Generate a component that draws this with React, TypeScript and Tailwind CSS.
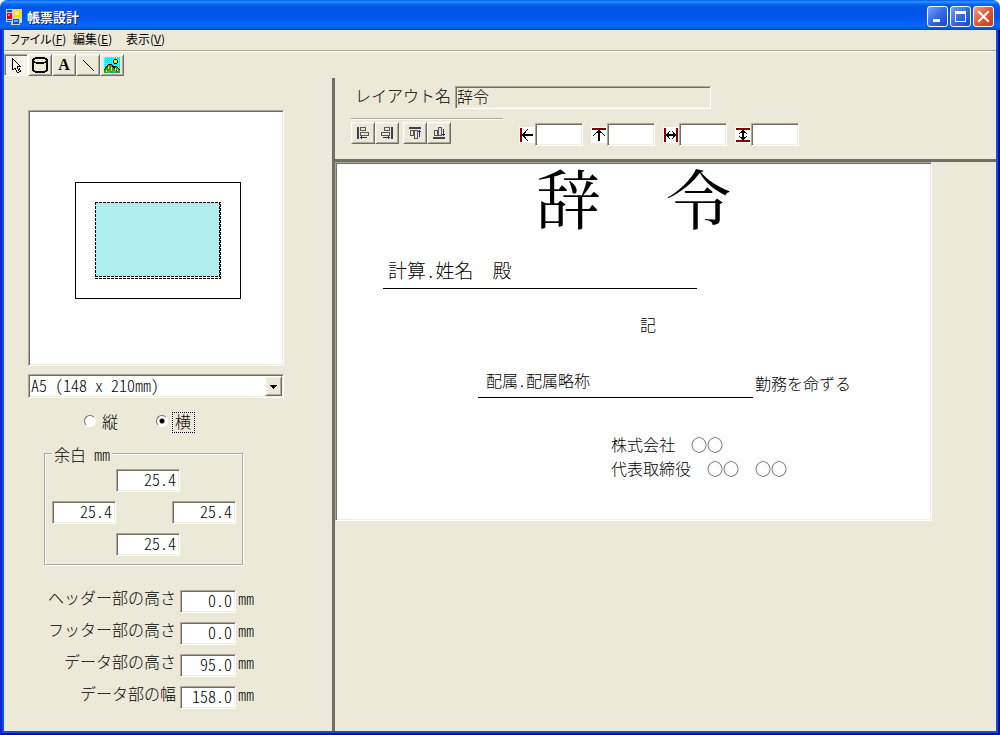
import { useState } from 'react';
import type { ReactNode } from 'react';
import clsx from 'clsx';

const sunken =
  'border border-t-[#aca899] border-l-[#aca899] border-r-white border-b-white shadow-[inset_1px_1px_0_#716f64,inset_-1px_-1px_0_#f1efe2]';
const raised =
  'border border-t-white border-l-white border-r-[#716f64] border-b-[#716f64] shadow-[inset_1px_1px_0_#f1efe2,inset_-1px_-1px_0_#aca899]';

const MENUS = [
  { label: 'ファイル', key: 'F', width: 'w-[63px]' },
  { label: '編集', key: 'E', width: 'w-[53px]' },
  { label: '表示', key: 'V', width: 'w-[53px]' },
];

const SIZES = [
  { id: 'header', label: 'ヘッダー部の高さ', value: '0.0' },
  { id: 'footer', label: 'フッター部の高さ', value: '0.0' },
  { id: 'dataHeight', label: 'データ部の高さ', value: '95.0' },
  { id: 'dataWidth', label: 'データ部の幅', value: '158.0' },
];

function Icon({ children, size = 16 }: { children: ReactNode; size?: number }) {
  return (
    <svg
      width={size}
      height={size}
      viewBox={`0 0 ${size} ${size}`}
      shapeRendering="crispEdges"
      fill="none"
      className="shrink-0"
      aria-hidden="true"
    >
      {children}
    </svg>
  );
}

function AppIcon() {
  return (
    <Icon>
      <path fill="#d4d0c8" d="M0 0h16v14h-2v2H5v-3H0z" />
      <path fill="#1048c0" d="M1 1h5v2H1zM1 11h5v1H1z" />
      <path fill="#e00020" d="M1 4h5v6H1z" />
      <path fill="#ff8080" d="M2 5h2v2H2z" />
      <path fill="#ffd800" d="M8 1h7v7H8z" />
      <path fill="#fff27a" d="M9 2h4v4H9z" />
      <path fill="#0050e8" d="M7 10h6v5H7z" />
      <path fill="#40c8ff" d="M8 11h4v2H8z" />
    </Icon>
  );
}

function CaptionButton({ label, close, children }: { label: string; close?: boolean; children: ReactNode }) {
  return (
    <button
      type="button"
      aria-label={label}
      className={clsx(
        'flex size-[21px] items-center justify-center rounded-[3px] border border-white',
        close
          ? 'bg-linear-to-br from-[#f0a088] via-[#e2552f] to-[#c93c12]'
          : 'bg-linear-to-br from-[#7ba2f5] via-[#3468e8] to-[#1848d0]',
      )}
    >
      {children}
    </button>
  );
}

function ToolButton({ label, active, children }: { label: string; active?: boolean; children: ReactNode }) {
  return (
    <button
      type="button"
      aria-label={label}
      className={clsx(
        'flex h-[22px] w-6 items-center justify-center',
        active ? `bg-[#f6f4ec] ${sunken}` : `bg-[#ece9d8] ${raised}`,
      )}
    >
      {children}
    </button>
  );
}

function NumberBox({ id, label, defaultValue, className }: {
  id?: string;
  label?: string;
  defaultValue?: string;
  className: string;
}) {
  return (
    <input
      id={id}
      type="text"
      aria-label={label}
      defaultValue={defaultValue}
      className={clsx('h-[23px] bg-white pr-[3px] pb-[3px] text-right outline-none', sunken, className)}
    />
  );
}

function PositionField({ label, children }: { label: string; children: ReactNode }) {
  return (
    <div className="flex items-center">
      <Icon>
        <path fill="#fff" d="M0 0h16v16H0z" />
        {children}
      </Icon>
      <NumberBox label={label} className="w-12" />
    </div>
  );
}

function TitleBar() {
  return (
    <header className="flex h-[30px] items-center justify-between rounded-t-[7px] bg-[linear-gradient(180deg,#0058ee_0%,#3593ff_6%,#127dff_10%,#0262ee_16%,#0057e5_24%,#0055eb_56%,#005bf5_68%,#026afe_82%,#0062ef_90%,#0048c8_100%)] px-1.5 pt-[3px]">
      <div className="flex items-center gap-[5px]">
        <AppIcon />
        <h1 className="text-[13px] leading-4 font-bold text-white [text-shadow:1px_1px_0_#0a1883]">帳票設計</h1>
      </div>
      <div className="flex gap-0.5">
        <CaptionButton label="最小化">
          <Icon size={15}>
            <path fill="#fff" d="M3 10h7v3H3z" />
          </Icon>
        </CaptionButton>
        <CaptionButton label="最大化">
          <Icon size={15}>
            <path fill="#fff" fillRule="evenodd" d="M2 2h11v11H2zM3 5h9v7H3z" />
          </Icon>
        </CaptionButton>
        <CaptionButton label="閉じる" close>
          <svg width="15" height="15" viewBox="0 0 15 15" aria-hidden="true">
            <path d="M3 3l9 9M12 3l-9 9" stroke="#fff" strokeWidth="2.2" strokeLinecap="square" />
          </svg>
        </CaptionButton>
      </div>
    </header>
  );
}

function MenuBar() {
  return (
    <nav className="flex h-[21px] items-center border-b border-[#aca899] pb-[3px] pl-1.5 text-[12px] leading-4 font-normal">
      {MENUS.map((menu) => (
        <button
          key={menu.key}
          type="button"
          className={clsx("text-left whitespace-nowrap [font-feature-settings:'palt']", menu.width)}
        >
          {menu.label}(<u>{menu.key}</u>)
        </button>
      ))}
    </nav>
  );
}

function ToolBar() {
  return (
    <div className="flex h-[27px] border-t border-white pt-0.5">
      <ToolButton label="選択" active>
        <Icon>
          <path
            fill="#000"
            d="M4 1h1v12H4zM5 2h1v1H5zM6 3h1v1H6zM7 4h1v1H7zM8 5h1v1H8zM9 6h1v1H9zM10 7h1v1h-1zM11 8h1v1h-1zM9 9h4v1H9zM9 10h1v2H9zM10 12h1v2h-1zM11 14h1v1h-1zM9 15h2v1H9zM8 13h1v2H8zM7 11h1v2H7zM6 11h1v1H6zM5 12h1v1H5zM11 11h1v2h-1zM12 13h1v2h-1z"
          />
        </Icon>
      </ToolButton>
      <ToolButton label="項目">
        <Icon>
          <path
            fill="#000"
            fillRule="evenodd"
            d="M3 0h10v1h2v1h1v12h-1v1h-2v1H3v-1H1v-1H0V2h1V1h2zM3 2v1H2v1h1v1h10V4h1V3h-1V2zM2 6v7h1v1h10v-1h1V6h-2v1H4V6z"
          />
        </Icon>
      </ToolButton>
      <ToolButton label="文字">
        <span className="font-['Liberation_Serif',serif] text-[16px] leading-4 font-bold">A</span>
      </ToolButton>
      <ToolButton label="線">
        <Icon>
          <path d="M3 3l11 11" stroke="#000" />
        </Icon>
      </ToolButton>
      <ToolButton label="画像">
        <Icon>
          <pattern id="sky" width="2" height="2" patternUnits="userSpaceOnUse">
            <path fill="#00f0f8" d="M0 0h2v2H0z" />
            <path fill="#b8f4f0" d="M0 0h1v1H0z" />
          </pattern>
          <path fill="url(#sky)" d="M0 0h16v16H0z" />
          <path fill="#000" d="M10 2h3v1h1v3h-1v1h-3V6H9V3h1z" />
          <path fill="#ffe000" d="M10 3h3v3h-3z" />
          <path fill="#30a020" d="M0 13l5-6h2l3 4 2-2h1l3 5v2H0z" />
          <path d="M0 13l5-6h2l6 7M9 10l3-1 4 4" stroke="#000" />
          <path fill="#ffe000" d="M4 9h1v3H4zM7 10h1v4H7zM2 13h1v2H2zM11 11h1v3h-1zM13 12h1v2h-1z" />
          <path fill="#18c8e0" d="M4 14h2v2H4zM9 14h2v2H9z" />
        </Icon>
      </ToolButton>
    </div>
  );
}

function PagePreview() {
  return (
    <div className={clsx('size-64 bg-white', sunken)}>
      <svg viewBox="0 0 254 254" fill="none" shapeRendering="crispEdges" role="img" aria-label="用紙">
        <rect x="46.5" y="71.5" width="165" height="116" stroke="#000" />
        <rect x="67" y="92" width="124" height="74" fill="#afeeee" />
        <path d="M66 91.5h126M66 167.5h126M66 165.5h126M66.5 91v77M190.5 91v75M191.5 93v75" stroke="#000" strokeDasharray="3 1" />
      </svg>
    </div>
  );
}

function SettingsPanel() {
  const [orientation, setOrientation] = useState('横');

  return (
    <aside className="w-[331px] shrink-0 border-r-3 border-[#716f64] pt-8 pl-6">
      <PagePreview />

      <div className="relative mt-2 flex h-6 w-64">
        <select
          aria-label="用紙サイズ"
          className={clsx('h-6 w-full appearance-none bg-white pb-0.5 pl-0.5 leading-5 outline-none', sunken)}
        >
          <option>A5 (148 x 210mm)</option>
        </select>
        <span
          className={clsx(
            'pointer-events-none absolute top-0.5 right-0.5 flex h-5 w-[17px] items-center justify-center bg-[#ece9d8]',
            raised,
          )}
        >
          <Icon size={7}>
            <path fill="#000" d="M0 2h7v1H0zM1 3h5v1H1zM2 4h3v1H2zM3 5h1v1H3z" />
          </Icon>
        </span>
      </div>

      <div className="mt-3.5 flex gap-9 pl-14">
        {['縦', '横'].map((name) => (
          <label key={name} className="flex h-[21px] items-start gap-1">
            <input
              type="radio"
              name="orientation"
              checked={orientation === name}
              onChange={() => setOrientation(name)}
              className="mt-[3px] size-3 appearance-none rounded-full border border-t-[#716f64] border-r-white border-b-white border-l-[#716f64] bg-white checked:bg-[radial-gradient(circle,#000_2px,#fff_3px)]"
            />
            <span
              className={clsx(
                'h-[21px] border border-dotted leading-4',
                orientation === name ? 'w-[23px] border-black px-0.5' : 'w-5 border-transparent px-px',
              )}
            >
              {name}
            </span>
          </label>
        ))}
      </div>

      <fieldset className="mt-[13px] ml-4 h-[120px] w-[199px] border-2 border-[#fffefa] px-1.5 [border-style:groove]">
        <legend className="px-0.5 leading-4 whitespace-pre">余白 mm</legend>
        <div className="flex flex-col gap-[9px] pt-[7px]">
          <div className="flex pl-16">
            <NumberBox label="上余白" defaultValue="25.4" className="w-16" />
          </div>
          <div className="flex gap-14">
            <NumberBox label="左余白" defaultValue="25.4" className="w-16" />
            <NumberBox label="右余白" defaultValue="25.4" className="w-16" />
          </div>
          <div className="flex pl-16">
            <NumberBox label="下余白" defaultValue="25.4" className="w-16" />
          </div>
        </div>
      </fieldset>

      <div className="mt-6 flex flex-col gap-[9px]">
        {SIZES.map((size) => (
          <div key={size.id} className="flex h-[23px]">
            <label htmlFor={size.id} className="mr-1 w-[148px] text-right leading-[14px]">
              {size.label}
            </label>
            <NumberBox id={size.id} defaultValue={size.value} className="w-14" />
            <span className="ml-0.5 leading-4">mm</span>
          </div>
        ))}
      </div>
    </aside>
  );
}

function LayoutHeader() {
  return (
    <div className="h-21 border-b-3 border-[#716f64] pt-2 pl-4">
      <div className="flex items-start pl-1">
        <label htmlFor="layoutName" className="w-[100px] leading-[18px]">
          レイアウト名
        </label>
        <input
          id="layoutName"
          type="text"
          readOnly
          defaultValue="辞令"
          className={clsx('h-[23px] w-64 bg-[#ece9d8] pb-[3px] pl-px outline-none', sunken)}
        />
      </div>

      <div className="mt-[9px] flex gap-4">
        <div className="w-[152px] border-t border-[#aca899]">
          <div className="flex gap-1 border-t border-white pt-0.5">
            <div className="flex">
              <ToolButton label="左揃え">
                <Icon>
                  <path fill="#404048" d="M2 2h2v12H2z" />
                  <path d="M5.5 2.5h5v3h-5zM5.5 7.5h8v3h-8z" stroke="#55555a" />
                  <path fill="#2828a0" d="M5 12h7v1H5zM6 11h1v3H6z" />
                </Icon>
              </ToolButton>
              <ToolButton label="右揃え">
                <Icon>
                  <path fill="#404048" d="M12 2h2v12h-2z" />
                  <path d="M5.5 2.5h5v3h-5zM2.5 7.5h8v3h-8z" stroke="#55555a" />
                  <path fill="#2828a0" d="M4 12h7v1H4zM9 11h1v3H9z" />
                </Icon>
              </ToolButton>
            </div>
            <div className="flex">
              <ToolButton label="上揃え">
                <Icon>
                  <path fill="#404048" d="M2 2h12v2H2z" />
                  <path d="M3.5 5.5h3v5h-3zM7.5 5.5h3v8h-3z" stroke="#55555a" />
                  <path fill="#2828a0" d="M12 5h1v7h-1zM11 6h3v1h-3z" />
                </Icon>
              </ToolButton>
              <ToolButton label="下揃え">
                <Icon>
                  <path fill="#404048" d="M2 12h12v2H2z" />
                  <path d="M3.5 5.5h3v5h-3zM7.5 2.5h3v8h-3z" stroke="#55555a" />
                  <path fill="#2828a0" d="M12 4h1v7h-1zM11 9h3v1h-3z" />
                </Icon>
              </ToolButton>
            </div>
          </div>
        </div>

        <div className="flex gap-2 pt-[5px]">
          <PositionField label="左位置">
            <path fill="#800000" d="M1 1h2v14H1z" />
            <path fill="#000" d="M4 7h10v2H4zM3 7h1v2H3zM4 6h2v1H4zM5 5h2v1H5zM6 4h1v1H6zM7 3h1v1H7zM8 2h1v1H8zM4 9h2v1H4zM5 10h2v1H5zM6 11h1v1H6zM7 12h1v1H7zM8 13h1v1H8z" />
          </PositionField>
          <PositionField label="上位置">
            <path fill="#800000" d="M1 1h14v2H1z" />
            <path fill="#000" d="M7 3h2v11H7zM6 4h4v1H6zM5 5h2v1H5zM9 5h2v1H9zM4 6h1v1H4zM11 6h1v1h-1zM3 7h1v1H3zM12 7h1v1h-1zM2 8h1v1H2zM13 8h1v1h-1z" />
          </PositionField>
          <PositionField label="幅">
            <path fill="#800000" d="M1 1h2v14H1zM13 1h2v14h-2z" />
            <path fill="#000" d="M3 7h10v2H3zM4 6h2v4H4zM10 6h2v4h-2zM5 5h1v6H5zM10 5h1v6h-1zM6 4h1v1H6zM9 4h1v1H9zM6 11h1v1H6zM9 11h1v1H9z" />
          </PositionField>
          <PositionField label="高さ">
            <path fill="#800000" d="M1 1h14v2H1zM1 13h14v2H1z" />
            <path fill="#000" d="M7 3h2v10H7zM6 4h4v2H6zM6 10h4v2H6zM5 5h6v1H5zM5 10h6v1H5zM4 6h1v1H4zM11 6h1v1h-1zM4 9h1v1H4zM11 9h1v1h-1z" />
          </PositionField>
        </div>
      </div>
    </div>
  );
}

// Report items sit at free coordinates on the sheet
function ReportSheet() {
  return (
    <div
      className={clsx(
        'relative h-[359px] w-[597px] bg-white leading-6 whitespace-nowrap [font-feature-settings:normal]',
        sunken,
      )}
    >
      <span className="absolute top-[-3px] left-[200px] font-['Noto_Serif_CJK_JP','Noto_Sans_CJK_JP',serif] text-[65px] leading-[72px] font-normal">
        辞　令
      </span>
      <span className="absolute top-[95px] left-[52px] text-[19px]">
        <span className="[font-feature-settings:'hwid']">計算.姓名</span>　殿
      </span>
      <hr className="absolute top-[125px] left-[47px] w-[314px] border-black" />
      <span className="absolute top-[149px] left-[304px]">記</span>
      <span className="absolute top-[205px] left-[150px] [font-feature-settings:'hwid']">配属.配属略称</span>
      <hr className="absolute top-[234px] left-[142px] w-[275px] border-black" />
      <span className="absolute top-[208px] left-[419px]">勤務を命ずる</span>
      <span className="absolute top-[269px] left-[275px]">株式会社　○○</span>
      <span className="absolute top-[293px] left-[275px]">代表取締役　○○　○○</span>
    </div>
  );
}

export default function App() {
  return (
    <div className="flex min-h-screen flex-col bg-white font-['Noto_Sans_CJK_JP',sans-serif] text-[16px] font-light text-black [font-feature-settings:'hwid']">
      <TitleBar />
      <div className="flex flex-1 flex-col border-2 border-t-0 border-r-[#000c90] border-b-[#000c90] border-l-[#0a28d8] bg-[#0850e8] px-0.5 pb-0.5">
        <div className="flex flex-1 flex-col bg-[#ece9d8]">
          <MenuBar />
          <ToolBar />
          <div className="flex flex-1">
            <SettingsPanel />
            <main className="min-w-0 flex-1">
              <LayoutHeader />
              <ReportSheet />
            </main>
          </div>
        </div>
      </div>
    </div>
  );
}
